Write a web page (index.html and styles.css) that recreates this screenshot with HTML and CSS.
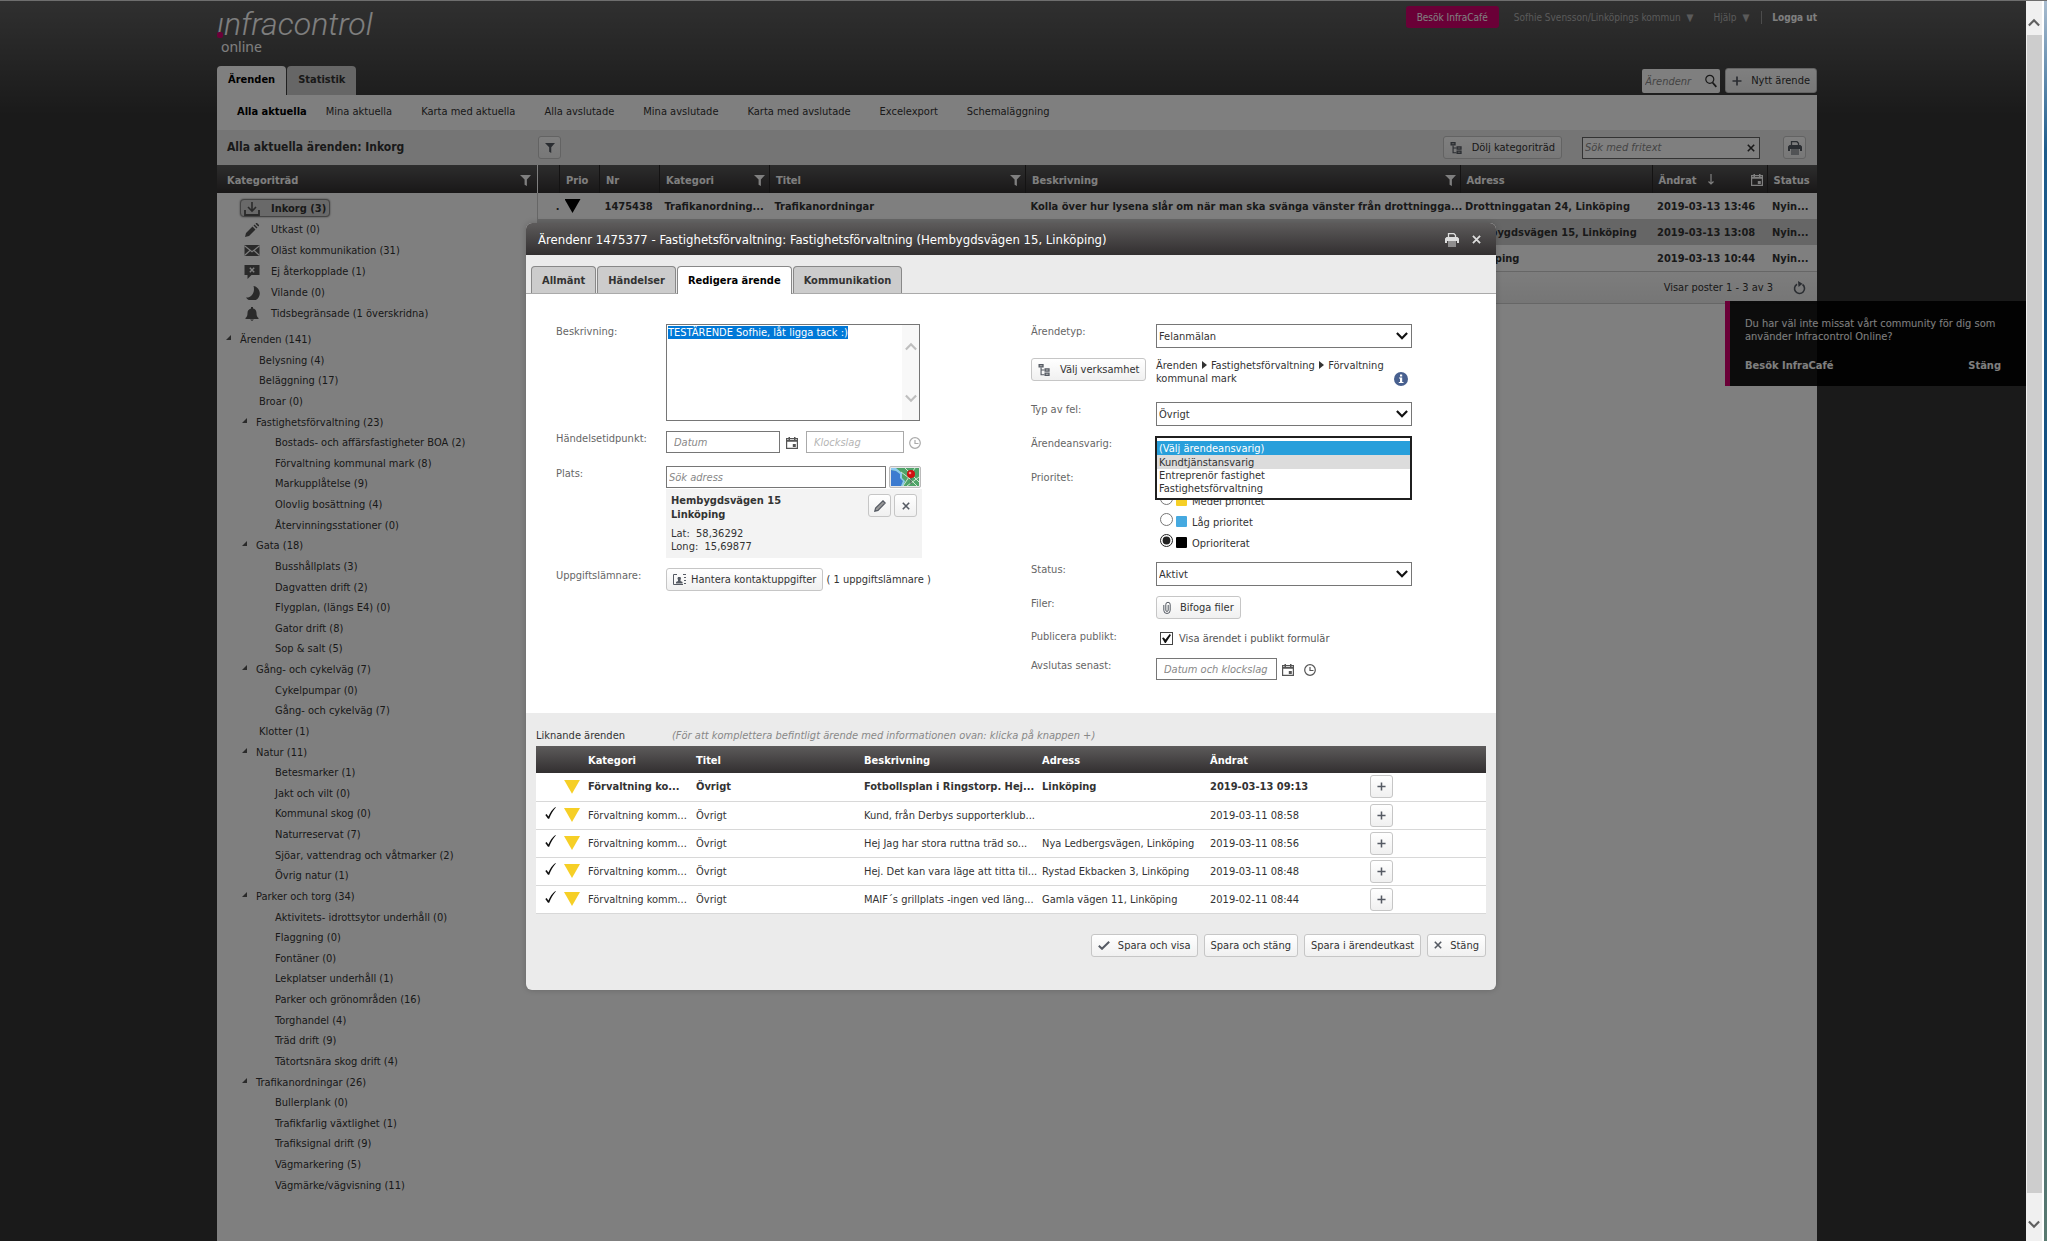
FILE: index.html
```
<!DOCTYPE html>
<html lang="sv">
<head>
    <meta charset="UTF-8">
    <meta name="viewport" content="width=device-width, initial-scale=1.0">
    <title>Infracontrol Online</title>
    <link rel="stylesheet" href="styles.css">
</head>
<body>
    <!-- icons -->
    <svg class="sprite" aria-hidden="true">
        <symbol id="i-filter" viewBox="0 0 12 12"><path d="M0 0h12L7.500 5v7L5 10.500V5z"/></symbol>
        <symbol id="i-tree" viewBox="0 0 14 14"><path d="M3 4v8.500h4M3 7h4" fill="none" stroke="currentColor" stroke-width="1.300"/><path d="M0 0h6v4H0zM7 5h6v4H7zM7 10h6v4H7z"/><path d="M8.500 6.500h3v1h-3zM8.500 11.500h3v1h-3zM1.500 1.500h3v1h-3z" fill="#bbb"/></symbol>
        <symbol id="i-print" viewBox="0 0 14 14"><path d="M3.500 4V.7h5.500l1.500 1.500V4" fill="none" stroke="currentColor" stroke-width="1.300"/><path d="M1.500 4h11L14 5.500V10h-2V8H2v2H0V5.500z"/><path d="M3 9h8M3 11h8M3 13h8" fill="none" stroke="currentColor" stroke-width="1.200"/></symbol>
        <symbol id="i-cal" viewBox="0 0 12 12"><path d="M.6 1.600h10.800v9.800H.6z" fill="none" stroke="currentColor" stroke-width="1.200"/><path d="M0 3h12v1.800H0zM2.500 0H4v3H2.500zM8 0h1.500v3H8zM6.800 7h3v3h-3z"/></symbol>
        <symbol id="i-clock" viewBox="0 0 12 12"><circle cx="6" cy="6" r="5.300" fill="none" stroke="currentColor" stroke-width="1.200"/><path d="M6 3v3.500h3.500" fill="none" stroke="currentColor" stroke-width="1.200"/></symbol>
        <symbol id="i-close" viewBox="0 0 8 8"><path d="M.8.8l6.400 6.400M7.200.8L.8 7.200" fill="none" stroke="currentColor" stroke-width="1.600"/></symbol>
        <symbol id="i-plus" viewBox="0 0 10 10"><path d="M5 .5v9M.5 5h9" fill="none" stroke="currentColor" stroke-width="1.700"/></symbol>
        <symbol id="i-check" viewBox="0 0 12 9"><path d="M.8 4.800l3.200 3L11.200.8" fill="none" stroke="currentColor" stroke-width="2"/></symbol>
        <symbol id="i-tick" viewBox="0 0 11 12"><path d="M.3 8L1.600 7l1.800 2.600C4.800 6 7.200 2.400 10.400 0l.4.400C8 3.500 5.600 7.500 4.200 11.800H3z"/></symbol>
        <symbol id="i-search" viewBox="0 0 12 14"><circle cx="4.800" cy="5.300" r="4" fill="none" stroke="currentColor" stroke-width="1.200"/><path d="M7.500 8.500l3.800 4.300" stroke="currentColor" stroke-width="1.800"/></symbol>
        <symbol id="i-clip" viewBox="0 0 8 13"><path d="M5.200 4v5.200a1.200 1.200 0 0 1-2.400 0V3.500a2.200 2.200 0 0 1 4.400 0v5.800a3.200 3.200 0 0 1-6.400 0V4" fill="none" stroke="currentColor"/></symbol>
        <symbol id="i-contact" viewBox="0 0 13 11"><path d="M3 .5H.5v10H3M3 10.500h7M3 .5h1M10 .5h3M11 3.500h2M11 6.500h2M11 9.500h2" fill="none" stroke="currentColor"/><path d="M3 9.500V8l2-1V6L4.500 4.500 5 3h2.500L8 4.500 7.500 6v1l2 1v1.500z"/></symbol>
        <symbol id="i-pencil" viewBox="0 0 14 14"><path d="M0 14l1-4 6.500-6.500 3 3L4 13zM8.500 2.500l1-1 3 3-1 1zM10.500.7l.7-.7h.8l2 2v.8l-.7.7z"/></symbol>
        <symbol id="i-pen" viewBox="0 0 12 12"><path d="M.8 11.200l.8-3.200L9 .8l2.200 2.200L4 10.400z" fill="#999" stroke="currentColor" stroke-width="1.200"/></symbol>
        <symbol id="i-inbox" viewBox="0 0 16 14"><path d="M1 8v5h14V8" fill="none" stroke="currentColor" stroke-width="1.800"/><path d="M8 0v8M4 5l4 4 4-4" fill="none" stroke="currentColor" stroke-width="1.600"/></symbol>
        <symbol id="i-mail" viewBox="0 0 15 11"><path d="M0 0h15v11H0z"/><path d="M0 .8l7.500 6 7.500-6M0 10.500l5.500-5M15 10.500l-5.500-5" fill="none" stroke="#fff" stroke-width="1.100"/></symbol>
        <symbol id="i-noreply" viewBox="0 0 15 14"><path d="M0 0h15v10H7l-4 4v-4H0z"/><path d="M5.300 2.800l4.400 4.400M9.700 2.800L5.300 7.200" stroke="#fff" stroke-width="1.400"/></symbol>
        <symbol id="i-moon" viewBox="0 0 14 14"><path d="M8.500 0A7.500 7.500 0 1 1 1 11.500C6 12 10.500 6.500 8.500 0z"/></symbol>
        <symbol id="i-bell" viewBox="0 0 14 14"><path d="M6 0h2v1.500c2.500.5 3.500 2.500 3.500 4.500 0 3 .8 4 2 5v1h-13v-1c1.200-1 2-2 2-5 0-2 1-4 3.500-4.500zM5 12.500h4L7 14z"/></symbol>
        <symbol id="i-refresh" viewBox="0 0 13 14"><path d="M4 3.200a5 5 0 1 0 5.500.3" fill="none" stroke="currentColor" stroke-width="1.600"/><path d="M5 0l4.500 2.700L5.500 6z"/></symbol>
        <symbol id="i-down" viewBox="0 0 12 8"><path d="M.9 1L6 6.200 11.100 1" fill="none" stroke="currentColor" stroke-width="2.200"/></symbol>
        <symbol id="i-up" viewBox="0 0 12 8"><path d="M.9 7L6 1.800 11.100 7" fill="none" stroke="currentColor" stroke-width="2.200"/></symbol>
        <symbol id="i-sort" viewBox="0 0 8 11"><path d="M4 0v10M1.500 7.500L4 10l2.500-2.500" fill="none" stroke="currentColor" stroke-width="1.200"/></symbol>
        <symbol id="i-info" viewBox="0 0 14 14"><circle cx="7" cy="7" r="7" fill="#48608f"/><path d="M5 5.500h3.200V10H9.500v1H4.800v-1H6V6.500H5zM6 2.500h2.200v2H6z" fill="#fff"/></symbol>
    </svg>

    <div class="viewport">
        <div class="page">
            <header class="top">
                <div class="logo">
                    <span class="logo-name">ınfracontrol<i class="logo-dot"></i></span>
                    <span class="logo-sub">online</span>
                </div>
                <div class="user-menu">
                    <button type="button" class="cafe">Besök InfraCafé</button>
                    <a href="#" class="user">Sofhie Svensson/Linköpings kommun <span class="caret">▼</span></a>
                    <a href="#" class="help">Hjälp <span class="caret">▼</span></a>
                    <a href="#" class="logout">Logga ut</a>
                </div>
            </header>
            <div class="tab-row">
                <nav class="main-tabs">
                    <a href="#" class="active">Ärenden</a>
                    <a href="#">Statistik</a>
                </nav>
                <div class="quick">
                    <label class="case-search">
                        <input type="text" placeholder="Ärendenr" aria-label="Ärendenr">
                        <svg width="12" height="14"><use href="#i-search"/></svg>
                    </label>
                    <button type="button" class="btn new-case"><svg width="10" height="10"><use href="#i-plus"/></svg>Nytt ärende</button>
                </div>
            </div>
            <nav class="sub-nav">
                <a href="#" class="active">Alla aktuella</a>
                <a href="#">Mina aktuella</a>
                <a href="#">Karta med aktuella</a>
                <a href="#">Alla avslutade</a>
                <a href="#">Mina avslutade</a>
                <a href="#">Karta med avslutade</a>
                <a href="#">Excelexport</a>
                <a href="#">Schemaläggning</a>
            </nav>
            <div class="toolbar">
                <h1>Alla aktuella ärenden: Inkorg</h1>
                <button type="button" class="btn icon-btn" aria-label="Filter"><svg width="10" height="10"><use href="#i-filter"/></svg></button>
                <div class="toolbar-right">
                    <button type="button" class="btn"><svg width="13" height="12"><use href="#i-tree"/></svg>Dölj kategoriträd</button>
                    <label class="text-search">
                        <input type="text" placeholder="Sök med fritext" aria-label="Sök med fritext">
                        <svg width="8" height="8"><use href="#i-close"/></svg>
                    </label>
                    <button type="button" class="btn icon-btn" aria-label="Skriv ut"><svg width="14" height="14"><use href="#i-print"/></svg></button>
                </div>
            </div>

            <div class="columns">
                <aside class="sidebar">
                    <div class="side-head">Kategoriträd <svg width="11" height="11"><use href="#i-filter"/></svg></div>
                    <ul class="boxes">
                        <li class="selected"><svg width="16" height="14"><use href="#i-inbox"/></svg>Inkorg (3)</li>
                        <li><svg width="16" height="14"><use href="#i-pencil"/></svg>Utkast (0)</li>
                        <li><svg width="16" height="11"><use href="#i-mail"/></svg>Oläst kommunikation (31)</li>
                        <li><svg width="16" height="14"><use href="#i-noreply"/></svg>Ej återkopplade (1)</li>
                        <li><svg width="16" height="14"><use href="#i-moon"/></svg>Vilande (0)</li>
                        <li><svg width="16" height="14"><use href="#i-bell"/></svg>Tidsbegränsade (1 överskridna)</li>
                    </ul>
                    <ul class="tree">
                        <li class="root open">Ärenden (141)</li>
                        <li>Belysning (4)</li>
                        <li>Beläggning (17)</li>
                        <li>Broar (0)</li>
                        <li class="open">Fastighetsförvaltning (23)</li>
                        <li class="leaf">Bostads- och affärsfastigheter BOA (2)</li>
                        <li class="leaf">Förvaltning kommunal mark (8)</li>
                        <li class="leaf">Markupplåtelse (9)</li>
                        <li class="leaf">Olovlig bosättning (4)</li>
                        <li class="leaf">Återvinningsstationer (0)</li>
                        <li class="open">Gata (18)</li>
                        <li class="leaf">Busshållplats (3)</li>
                        <li class="leaf">Dagvatten drift (2)</li>
                        <li class="leaf">Flygplan, (längs E4) (0)</li>
                        <li class="leaf">Gator drift (8)</li>
                        <li class="leaf">Sop &amp; salt (5)</li>
                        <li class="open">Gång- och cykelväg (7)</li>
                        <li class="leaf">Cykelpumpar (0)</li>
                        <li class="leaf">Gång- och cykelväg (7)</li>
                        <li>Klotter (1)</li>
                        <li class="open">Natur (11)</li>
                        <li class="leaf">Betesmarker (1)</li>
                        <li class="leaf">Jakt och vilt (0)</li>
                        <li class="leaf">Kommunal skog (0)</li>
                        <li class="leaf">Naturreservat (7)</li>
                        <li class="leaf">Sjöar, vattendrag och våtmarker (2)</li>
                        <li class="leaf">Övrig natur (1)</li>
                        <li class="open">Parker och torg (34)</li>
                        <li class="leaf">Aktivitets- idrottsytor underhåll (0)</li>
                        <li class="leaf">Flaggning (0)</li>
                        <li class="leaf">Fontäner (0)</li>
                        <li class="leaf">Lekplatser underhåll (1)</li>
                        <li class="leaf">Parker och grönområden (16)</li>
                        <li class="leaf">Torghandel (4)</li>
                        <li class="leaf">Träd drift (9)</li>
                        <li class="leaf">Tätortsnära skog drift (4)</li>
                        <li class="open">Trafikanordningar (26)</li>
                        <li class="leaf">Bullerplank (0)</li>
                        <li class="leaf">Trafikfarlig växtlighet (1)</li>
                        <li class="leaf">Trafiksignal drift (9)</li>
                        <li class="leaf">Vägmarkering (5)</li>
                        <li class="leaf">Vägmärke/vägvisning (11)</li>
                    </ul>
                </aside>
                <main class="list">
                    <table class="cases">
                        <colgroup>
                            <col class="c-dot"><col class="c-prio"><col class="c-nr"><col class="c-cat"><col class="c-title"><col><col class="c-addr"><col class="c-date"><col class="c-status">
                        </colgroup>
                        <thead>
                            <tr>
                                <th></th>
                                <th>Prio</th>
                                <th>Nr</th>
                                <th><div class="th">Kategori <svg width="11" height="11"><use href="#i-filter"/></svg></div></th>
                                <th><div class="th">Titel <svg width="11" height="11"><use href="#i-filter"/></svg></div></th>
                                <th><div class="th">Beskrivning <svg width="11" height="11"><use href="#i-filter"/></svg></div></th>
                                <th>Adress</th>
                                <th><div class="th"><span>Ändrat <svg class="sort" width="8" height="11"><use href="#i-sort"/></svg></span><svg width="12" height="12"><use href="#i-cal"/></svg></div></th>
                                <th>Status</th>
                            </tr>
                        </thead>
                        <tbody>
                            <tr>
                                <td class="dot">.</td>
                                <td><span class="prio black"></span></td>
                                <td>1475438</td>
                                <td>Trafikanordning...</td>
                                <td>Trafikanordningar</td>
                                <td>Kolla över hur lysena slår om när man ska svänga vänster från drottningga...</td>
                                <td>Drottninggatan 24, Linköping</td>
                                <td>2019-03-13 13:46</td>
                                <td>Nyin...</td>
                            </tr>
                            <tr class="marked">
                                <td></td><td></td><td></td><td></td><td></td><td></td>
                                <td>Hembygdsvägen 15, Linköping</td>
                                <td>2019-03-13 13:08</td>
                                <td>Nyin...</td>
                            </tr>
                            <tr>
                                <td></td><td></td><td></td><td></td><td></td><td></td>
                                <td>Linköping</td>
                                <td>2019-03-13 10:44</td>
                                <td>Nyin...</td>
                            </tr>
                        </tbody>
                    </table>
                    <div class="pager">Visar poster 1 - 3 av 3 <svg width="13" height="14"><use href="#i-refresh"/></svg></div>
                </main>
            </div>
        </div>

        <div class="notice">
            <p>Du har väl inte missat vårt community för dig som använder Infracontrol Online?</p>
            <div class="notice-actions"><a href="#">Besök InfraCafé</a><a href="#">Stäng</a></div>
        </div>

        <div class="overlay">
            <section class="modal">
                <header class="modal-head">
                    <h2>Ärendenr 1475377 - Fastighetsförvaltning: Fastighetsförvaltning (Hembygdsvägen 15, Linköping)</h2>
                    <button type="button" aria-label="Skriv ut"><svg width="14" height="14"><use href="#i-print"/></svg></button>
                    <button type="button" aria-label="Stäng"><svg width="9" height="9"><use href="#i-close"/></svg></button>
                </header>
                <nav class="modal-tabs">
                    <a href="#">Allmänt</a>
                    <a href="#">Händelser</a>
                    <a href="#" class="active">Redigera ärende</a>
                    <a href="#">Kommunikation</a>
                </nav>
                <form class="form">
                    <div class="left">
                        <div class="row">
                            <label for="desc">Beskrivning:</label>
                            <div class="area">
                                <textarea id="desc" spellcheck="false">TESTÄRENDE Sofhie, låt ligga tack :)</textarea>
                                <div class="area-scroll"><svg width="12" height="9"><use href="#i-up"/></svg><svg width="12" height="9"><use href="#i-down"/></svg></div>
                            </div>
                        </div>
                        <div class="row wide">
                            <label for="date">Händelsetidpunkt:</label>
                            <div class="line">
                                <input type="text" id="date" class="date" placeholder="Datum">
                                <svg width="12" height="12"><use href="#i-cal"/></svg>
                                <input type="text" class="time" placeholder="Klockslag" aria-label="Klockslag">
                                <svg class="pale" width="12" height="12"><use href="#i-clock"/></svg>
                            </div>
                        </div>
                        <div class="row">
                            <label for="place">Plats:</label>
                            <div class="place">
                                <div class="line">
                                    <input type="text" id="place" placeholder="Sök adress">
                                    <button type="button" class="map" aria-label="Karta">
                                        <svg width="28" height="18" viewBox="0 0 28 18">
                                            <path fill="#4fa368" d="M0 0h28v18H0z"/>
                                            <path fill="#3c7bd0" d="M0 2l5 1 4 3v4l3 3-2 5H0z"/>
                                            <path fill="#8cc8f0" d="M0 0h5l6 5v5l3 3-2 5h-2l2-5-3-3V6L5 3 0 2z"/>
                                            <path stroke="#cfe8cf" fill="none" d="M12 18L24 0M16 18l12-9M10 4l8 6 8 8M14 0l14 14"/>
                                            <path stroke="#555" d="M20 9v7"/>
                                            <circle cx="20" cy="6" r="4" fill="#d01010"/>
                                            <circle cx="19" cy="5" r="1.300" fill="#f88"/>
                                        </svg>
                                    </button>
                                </div>
                                <div class="address">
                                    <div class="address-text">
                                        <strong>Hembygdsvägen 15</strong>
                                        <strong>Linköping</strong>
                                        <span class="lat">Lat:&nbsp; 58,36292</span>
                                        <span>Long:&nbsp; 15,69877</span>
                                    </div>
                                    <button type="button" class="btn icon-btn" aria-label="Redigera"><svg width="12" height="12"><use href="#i-pen"/></svg></button>
                                    <button type="button" class="btn icon-btn" aria-label="Ta bort"><svg width="8" height="8"><use href="#i-close"/></svg></button>
                                </div>
                            </div>
                        </div>
                        <div class="row">
                            <span class="label">Uppgiftslämnare:</span>
                            <div class="line">
                                <button type="button" class="btn contact"><svg width="13" height="11"><use href="#i-contact"/></svg>Hantera kontaktuppgifter</button>
                                <span class="count">( 1 uppgiftslämnare )</span>
                            </div>
                        </div>
                    </div>

                    <div class="right">
                        <div class="row">
                            <label for="type">Ärendetyp:</label>
                            <div class="select"><select id="type"><option>Felanmälan</option></select><svg width="12" height="8"><use href="#i-down"/></svg></div>
                        </div>
                        <div class="row crumbs-row">
                            <div><button type="button" class="btn"><svg width="13" height="12"><use href="#i-tree"/></svg>Välj verksamhet</button></div>
                            <div class="crumbs">
                                <span>Ärenden <i class="sep"></i> Fastighetsförvaltning <i class="sep"></i> Förvaltning kommunal mark</span>
                                <svg width="14" height="14"><use href="#i-info"/></svg>
                            </div>
                        </div>
                        <div class="row">
                            <label for="fault">Typ av fel:</label>
                            <div class="select"><select id="fault"><option>Övrigt</option></select><svg width="12" height="8"><use href="#i-down"/></svg></div>
                        </div>
                        <div class="row">
                            <label for="owner">Ärendeansvarig:</label>
                            <div class="owner">
                                <select id="owner" size="4">
                                    <option selected>(Välj ärendeansvarig)</option>
                                    <option class="hover">Kundtjänstansvarig</option>
                                    <option>Entreprenör fastighet</option>
                                    <option>Fastighetsförvaltning</option>
                                </select>
                            </div>
                        </div>
                        <div class="row prio-row">
                            <span class="label">Prioritet:</span>
                            <div class="radios">
                                <label><input type="radio" name="prio"><i class="swatch red"></i>Hög prioritet</label>
                                <label><input type="radio" name="prio"><i class="swatch yellow"></i>Medel prioritet</label>
                                <label><input type="radio" name="prio"><i class="swatch blue"></i>Låg prioritet</label>
                                <label><input type="radio" name="prio" checked><i class="swatch"></i>Oprioriterat</label>
                            </div>
                        </div>
                        <div class="row">
                            <label for="status">Status:</label>
                            <div class="select"><select id="status"><option>Aktivt</option></select><svg width="12" height="8"><use href="#i-down"/></svg></div>
                        </div>
                        <div class="row">
                            <span class="label">Filer:</span>
                            <div><button type="button" class="btn"><svg width="8" height="13"><use href="#i-clip"/></svg>Bifoga filer</button></div>
                        </div>
                        <div class="row">
                            <span class="label">Publicera publikt:</span>
                            <label class="publish"><input type="checkbox" checked>Visa ärendet i publikt formulär</label>
                        </div>
                        <div class="row">
                            <label for="due">Avslutas senast:</label>
                            <div class="line due">
                                <input type="text" id="due" placeholder="Datum och klockslag">
                                <svg width="12" height="12"><use href="#i-cal"/></svg>
                                <svg width="12" height="12"><use href="#i-clock"/></svg>
                            </div>
                        </div>
                    </div>
                </form>

                <div class="similar">
                    <div class="similar-head"><span>Liknande ärenden</span><em>(För att komplettera befintligt ärende med informationen ovan: klicka på knappen +)</em></div>
                    <table>
                        <colgroup>
                            <col class="s-tick"><col class="s-prio"><col class="s-cat"><col class="s-title"><col class="s-desc"><col class="s-title"><col class="s-date"><col>
                        </colgroup>
                        <thead>
                            <tr><th></th><th></th><th>Kategori</th><th>Titel</th><th>Beskrivning</th><th>Adress</th><th>Ändrat</th><th></th></tr>
                        </thead>
                        <tbody>
                            <tr class="unread">
                                <td></td>
                                <td><span class="prio"></span></td>
                                <td>Förvaltning ko...</td><td>Övrigt</td><td>Fotbollsplan i Ringstorp. Hej...</td><td>Linköping</td><td>2019-03-13 09:13</td>
                                <td><button type="button" class="btn icon-btn" aria-label="Lägg till"><svg width="9" height="9"><use href="#i-plus"/></svg></button></td>
                            </tr>
                            <tr>
                                <td><svg class="tick" width="11" height="12"><use href="#i-tick"/></svg></td>
                                <td><span class="prio"></span></td>
                                <td>Förvaltning komm...</td><td>Övrigt</td><td>Kund, från Derbys supporterklub...</td><td></td><td>2019-03-11 08:58</td>
                                <td><button type="button" class="btn icon-btn" aria-label="Lägg till"><svg width="9" height="9"><use href="#i-plus"/></svg></button></td>
                            </tr>
                            <tr>
                                <td><svg class="tick" width="11" height="12"><use href="#i-tick"/></svg></td>
                                <td><span class="prio"></span></td>
                                <td>Förvaltning komm...</td><td>Övrigt</td><td>Hej Jag har stora ruttna träd so...</td><td>Nya Ledbergsvägen, Linköping</td><td>2019-03-11 08:56</td>
                                <td><button type="button" class="btn icon-btn" aria-label="Lägg till"><svg width="9" height="9"><use href="#i-plus"/></svg></button></td>
                            </tr>
                            <tr>
                                <td><svg class="tick" width="11" height="12"><use href="#i-tick"/></svg></td>
                                <td><span class="prio"></span></td>
                                <td>Förvaltning komm...</td><td>Övrigt</td><td>Hej. Det kan vara läge att titta til...</td><td>Rystad Ekbacken 3, Linköping</td><td>2019-03-11 08:48</td>
                                <td><button type="button" class="btn icon-btn" aria-label="Lägg till"><svg width="9" height="9"><use href="#i-plus"/></svg></button></td>
                            </tr>
                            <tr>
                                <td><svg class="tick" width="11" height="12"><use href="#i-tick"/></svg></td>
                                <td><span class="prio"></span></td>
                                <td>Förvaltning komm...</td><td>Övrigt</td><td>MAIF´s grillplats -ingen ved läng...</td><td>Gamla vägen 11, Linköping</td><td>2019-02-11 08:44</td>
                                <td><button type="button" class="btn icon-btn" aria-label="Lägg till"><svg width="9" height="9"><use href="#i-plus"/></svg></button></td>
                            </tr>
                        </tbody>
                    </table>
                    <div class="modal-actions">
                        <button type="button" class="btn"><svg width="12" height="9"><use href="#i-check"/></svg>Spara och visa</button>
                        <button type="button" class="btn">Spara och stäng</button>
                        <button type="button" class="btn">Spara i ärendeutkast</button>
                        <button type="button" class="btn"><svg width="8" height="8"><use href="#i-close"/></svg>Stäng</button>
                    </div>
                </div>
            </section>
        </div>
    </div>

    <div class="scrollbar">
        <svg width="12" height="9"><use href="#i-up"/></svg>
        <div class="thumb"></div>
        <svg width="12" height="9"><use href="#i-down"/></svg>
    </div>
    <div class="desktop-edge"></div>

    <script>
        // select the whole description when the form opens
        document.getElementById('desc').select();
    </script>
</body>
</html>
```
FILE: styles.css
```
* {
    box-sizing: border-box;
}
body {
    margin: 0;
    height: 100vh;
    display: flex;
    overflow: hidden;
    border-top: 1px solid #6e6e6e;
    background: #343434;
    font-family: 'DejaVu Sans Condensed', 'DejaVu Sans', sans-serif;
    font-size: 11px;
    line-height: 13px;
    color: #333;
}
a {
    color: inherit;
    text-decoration: none;
}
ul {
    list-style: none;
    margin: 0;
    padding: 0;
}
svg {
    flex: none;
    display: block;
    fill: currentColor;
}
button, input, select, textarea {
    font: inherit;
    color: inherit;
}
input::placeholder {
    color: #888;
    font-style: italic;
    opacity: 1;
}
.sprite {
    position: absolute;
    width: 0;
    height: 0;
}

.viewport {
    flex: 1;
    position: relative;
    overflow: hidden;
    background: linear-gradient(#606060, #343434 115px);
}
.page {
    margin: 0 209px 0 217px;
}

/* header */
.top {
    height: 65px;
    display: flex;
    justify-content: space-between;
    align-items: flex-start;
    color: #fff;
}
.logo {
    padding-top: 7px;
}
.logo-name {
    display: block;
    position: relative;
    font: italic 300 32px/32px Roboto, sans-serif;
}
.logo-dot {
    position: absolute;
    left: 0;
    top: 24px;
    width: 6px;
    height: 6px;
    border-radius: 2px;
    background: #d4006f;
}
.logo-sub {
    display: block;
    padding-left: 4px;
    font: 14px/14px 'Noto Sans', sans-serif;
}
.user-menu {
    display: flex;
    align-items: center;
    padding-top: 5px;
    font-size: 10px;
    color: #b4b4b4;
}
.cafe {
    height: 22px;
    padding: 1px 11px 0;
    border: none;
    border-radius: 3px;
    background: #d4006f;
    color: #fff;
}
.user-menu a {
    margin-top: 1px;
}
.user {
    margin-left: 15px;
}
.help {
    margin-left: 20px;
}
.caret {
    margin-left: 3px;
}
.logout {
    margin-left: 12px;
    padding-left: 10px;
    border-left: 1px solid #999;
    font-weight: bold;
    color: #fff;
}
.tab-row {
    display: flex;
    justify-content: space-between;
    height: 29px;
}
.main-tabs {
    display: flex;
    gap: 1px;
    font-weight: bold;
    line-height: 28px;
}
.main-tabs a {
    padding: 0 11px;
    border-radius: 4px 4px 0 0;
    background: #ccc;
}
.main-tabs .active {
    background: #fff;
    color: #000;
}
.quick {
    display: flex;
    gap: 5px;
    padding-top: 2px;
}
.case-search {
    display: flex;
    align-items: center;
    width: 78px;
    height: 24px;
    margin-top: 1px;
    padding: 0 3px;
    border-radius: 2px;
    background: #fff;
}
.case-search input {
    width: 60px;
    flex: 1;
    border: none;
    padding: 0;
    background: none;
}
.quick .btn {
    height: 25px;
}

.sub-nav {
    display: flex;
    gap: 29px;
    height: 35px;
    padding: 0 20px;
    line-height: 33px;
    background: #fff;
}
.sub-nav .active {
    margin-right: -10px;
    font-weight: bold;
    color: #000;
}

.btn {
    display: inline-flex;
    align-items: center;
    justify-content: center;
    gap: 9px;
    height: 23px;
    padding: 0 6px;
    border: 1px solid #c6c6c6;
    border-radius: 3px;
    background: linear-gradient(#fff, #f0f0f0);
    color: #333;
    white-space: nowrap;
    cursor: pointer;
}
.btn svg {
    color: #555a63;
}
.icon-btn {
    width: 23px;
    padding: 0;
}

.toolbar {
    display: flex;
    align-items: center;
    height: 35px;
    padding: 0 11px 0 10px;
    background: #eaeaea;
}
.toolbar h1 {
    width: 311px;
    margin: 0;
    font-size: 12px;
}
.toolbar-right {
    display: flex;
    align-items: center;
    margin-left: auto;
}
.text-search {
    display: flex;
    align-items: center;
    width: 178px;
    height: 22px;
    margin: 0 23px 0 20px;
    padding: 0 4px 0 2px;
    border: 1px solid #666;
    background: #fff;
}
.text-search input {
    flex: 1;
    width: 100px;
    border: none;
    padding: 0;
    background: none;
}

/* category tree */
.columns {
    display: flex;
    min-height: 1100px;
    background: #fff;
}
.sidebar {
    width: 320px;
}
.side-head {
    display: flex;
    align-items: center;
    justify-content: space-between;
    height: 28px;
    padding: 2px 6px 0 10px;
    background: linear-gradient(#5b5b5b, #322f30);
    font-weight: bold;
    color: #fff;
}
.boxes {
    display: flex;
    flex-direction: column;
    align-items: flex-start;
    gap: 3px;
    padding: 6px 0 0 23px;
}
.boxes li {
    display: flex;
    align-items: center;
    gap: 11px;
    height: 18px;
    padding: 1px 3px 0;
    border: 1px solid transparent;
    border-radius: 4px;
}
.boxes svg {
    color: #555;
}
.boxes .selected {
    border-color: #888;
    background: #d2d2d2;
    box-shadow: 0 0 2px #777;
    font-weight: bold;
}
.tree {
    padding-top: 8px;
    line-height: 1.875;
}
.tree li {
    padding-left: 42px;
}
.tree .leaf {
    padding-left: 58px;
}
.tree .open::before {
    content: '';
    display: inline-block;
    margin: 0 9px 3px 0;
    border: solid transparent;
    border-width: 0 0 5px 5px;
    border-bottom-color: #555;
}
.tree .open {
    padding-left: 25px;
}
.tree .root {
    padding-left: 9px;
}

/* case list */
.list {
    flex: 1;
}
table {
    width: 100%;
    table-layout: fixed;
    border-collapse: collapse;
}
th, td {
    padding: 0;
    text-align: left;
    white-space: nowrap;
}
.c-dot { width: 22px; }
.c-prio { width: 40px; }
.c-nr { width: 60px; }
.c-cat { width: 110px; }
.c-title { width: 256px; }
.c-addr { width: 192px; }
.c-date { width: 115px; }
.c-status { width: 50px; }
.cases thead tr {
    height: 28px;
    background: linear-gradient(#5b5b5b, #322f30);
    color: #fff;
}
.cases th {
    padding: 2px 4px 0 6px;
}
.cases th + th {
    border-left: 1px solid #292727;
}
.th {
    display: flex;
    align-items: center;
    justify-content: space-between;
}
.th span {
    display: flex;
    gap: 10px;
}
.cases td {
    height: 26px;
    padding-left: 5px;
    font-weight: bold;
}
.cases .marked {
    background: #cdcdcd;
}
.cases .dot {
    text-align: right;
}
.cases tbody, .pager {
    border-left: 1px solid #ccc;
}
.prio {
    display: block;
    width: 16px;
    height: 14px;
    background: #f6cf26;
    clip-path: polygon(0 0, 100% 0, 50% 100%);
}
.prio.black {
    background: #000;
}
.pager {
    display: flex;
    align-items: center;
    justify-content: flex-end;
    gap: 20px;
    height: 33px;
    padding-right: 11px;
    border-top: 1px solid #ccc;
    border-bottom: 1px solid #ccc;
    background: linear-gradient(#fafafa, #ececec);
}
.pager svg {
    color: #555a63;
}

.notice {
    position: absolute;
    right: 0;
    top: 300px;
    width: 301px;
    height: 85px;
    padding: 16px 25px 0 15px;
    border-left: 5px solid #d4006f;
    background: rgba(0, 0, 0, 0.9);
    color: #fff;
}
.notice p {
    margin: 0 0 16px;
}
.notice-actions {
    display: flex;
    justify-content: space-between;
    font-weight: bold;
}

/* edit dialog */
.overlay {
    position: absolute;
    inset: 0;
    display: flex;
    justify-content: center;
    align-items: flex-start;
    padding: 222px 4px 0 0;
    background: rgba(0, 0, 0, 0.5);
}
.modal {
    width: 100%;
    max-width: 970px;
    border-radius: 6px;
    overflow: hidden;
    background: #ebebeb;
    box-shadow: 0 0 6px rgba(0, 0, 0, 0.2);
}
.modal-head {
    display: flex;
    align-items: center;
    gap: 13px;
    height: 32px;
    padding: 1px 15px 0 12px;
    background: linear-gradient(#5d5b5b, #322f30);
    color: #fff;
}
.modal-head h2 {
    flex: 1;
    margin: 0;
    font-size: 13px;
    font-weight: normal;
}
.modal-head button {
    padding: 0;
    border: none;
    background: none;
    color: #ddd;
}
.modal-tabs {
    display: flex;
    gap: 1px;
    height: 39px;
    padding: 11px 5px 0;
    border-bottom: 1px solid #aaa;
    font-weight: bold;
    line-height: 27px;
}
.modal-tabs a {
    height: 27px;
    padding: 0 10px;
    border: 1px solid #888;
    border-bottom: none;
    border-radius: 4px 4px 0 0;
    background: #ccc;
}
.modal-tabs .active {
    height: 28px;
    background: #fff;
    color: #000;
}
.form {
    display: flex;
    justify-content: space-between;
    height: 419px;
    padding: 30px 84px 0 30px;
    background: #fff;
}
.row {
    display: grid;
    grid-template-columns: 110px 1fr;
    margin-bottom: 10px;
}
.left {
    width: 375px;
}
.right {
    width: 381px;
}
.right .row {
    grid-template-columns: 125px 1fr;
}
.row.wide {
    margin-bottom: 13px;
}
.row > label:first-child, .label {
    line-height: 15px;
    color: #666;
}
.line {
    display: flex;
    align-items: center;
}
.line input {
    height: 22px;
    border: 1px solid #767676;
    padding: 0 2px;
    background: #fff;
}
.area {
    display: flex;
    width: 254px;
    height: 97px;
    border: 1px solid #767676;
}
.area textarea {
    flex: 1;
    width: 200px;
    padding: 1px;
    border: none;
    outline: none;
    resize: none;
    overflow: hidden;
}
.area textarea::selection {
    background: #0078d7;
    color: #fff;
}
.area-scroll {
    display: flex;
    flex-direction: column;
    justify-content: space-between;
    align-items: center;
    width: 17px;
    padding: 17px 0;
    background: #f8f8f8;
    color: #bfbfbf;
}
.line .date {
    width: 114px;
    padding-left: 7px;
}
.line .time {
    width: 98px;
    padding-left: 7px;
    border-color: #aaa;
}
.line .time::placeholder {
    color: #b5b5b5;
}
.wide .line svg {
    margin: 2px 0 0 6px;
    color: #555;
}
.wide .time {
    margin-left: 8px;
}
.wide .line .pale {
    margin-left: 5px;
    color: #aaa;
}
#place {
    width: 220px;
}
.map {
    width: 32px;
    height: 22px;
    margin-left: 3px;
    padding: 1px;
    border: 1px solid #bbb;
    border-radius: 2px;
    background: #e8e8e8;
}
.address {
    display: flex;
    gap: 3px;
    width: 256px;
    height: 69px;
    margin-top: 1px;
    padding: 5px;
    background: #f3f3f3;
}
.address-text {
    display: flex;
    flex-direction: column;
    flex: 1;
}
.address strong {
    line-height: 14px;
}
.address .lat {
    margin-top: 5px;
}
.btn.contact {
    gap: 5px;
}
.count {
    margin-left: 3px;
    white-space: nowrap;
}

.select {
    position: relative;
}
.select select {
    display: block;
    appearance: none;
    width: 100%;
    height: 24px;
    padding: 0 2px;
    border: 1px solid #767676;
    border-radius: 0;
    background: #fff;
}
.select svg {
    position: absolute;
    right: 4px;
    top: 8px;
    color: #111;
}
.right .crumbs-row {
    height: 34px;
}
.crumbs {
    display: flex;
    align-items: flex-end;
    justify-content: space-between;
    padding-right: 4px;
    height: 28px;
}
.crumbs span {
    width: 236px;
    height: 27px;
}
.sep {
    display: inline-block;
    margin: 0 1px;
    border: solid transparent;
    border-width: 4px 0 4px 5px;
    border-left-color: #333;
}
.owner {
    position: relative;
    height: 24px;
}
.owner select {
    position: absolute;
    left: -1px;
    top: 0;
    z-index: 1;
    width: 257px;
    height: 64px;
    padding: 3px 0;
    border: 2px solid #1f1f1f;
    border-radius: 0;
    outline: none;
    overflow: hidden;
    background: #fff;
}
.owner option {
    min-height: 13px;
    padding: 0 2px;
    line-height: 13px;
}
.owner option:checked {
    padding-top: 1px;
    background: linear-gradient(#289fdb, #289fdb);
    -webkit-text-fill-color: #fff;
}
.owner .hover {
    padding-top: 1px;
    background: #dcdcdc;
}
.right .prio-row {
    margin-bottom: 8px;
}
.radios label {
    display: flex;
    align-items: flex-start;
    height: 21px;
    padding-left: 4px;
    line-height: 21px;
}
.radios input {
    width: 13px;
    height: 13px;
    margin: 1px 3px 0 0;
    accent-color: #222;
}
.swatch {
    width: 11px;
    height: 11px;
    margin: 4px 5px 0 0;
    border-radius: 1px;
    background: #000;
}
.swatch.red { background: #d9232e; }
.swatch.yellow { background: #f6cf26; }
.swatch.blue { background: #45a9e0; }
.publish {
    display: flex;
    align-items: center;
    height: 19px;
    padding-left: 4px;
    color: #555;
}
.publish input {
    appearance: none;
    width: 13px;
    height: 13px;
    margin: 0 6px 0 0;
    border: 1px solid #444;
    background: #fff;
}
.publish input:checked::before {
    content: '';
    display: block;
    width: 9px;
    height: 9px;
    margin: 1px;
    background: #111;
    clip-path: polygon(0 45%, 20% 40%, 38% 62%, 85% 0, 100% 12%, 42% 100%, 32% 100%);
}
.due input {
    width: 121px;
    padding-left: 7px;
}
.due svg {
    margin: 2px 5px 0;
    color: #555;
}

/* similar cases */
.similar {
    padding: 14px 10px 33px;
}
.similar-head {
    display: flex;
    height: 19px;
    line-height: 17px;
}
.similar-head span {
    width: 136px;
}
.similar-head em {
    color: #888;
}
.s-tick { width: 28px; }
.s-prio { width: 24px; }
.s-cat { width: 108px; }
.s-title { width: 168px; }
.s-desc { width: 178px; }
.s-date { width: 160px; }
.similar thead tr {
    height: 27px;
    background: linear-gradient(#5d5b5b, #322f30);
    color: #fff;
}
.similar th {
    padding-top: 2px;
}
.similar tbody tr {
    height: 28px;
    border-bottom: 1px solid #d8d8d8;
    background: #fff;
}
.similar .unread {
    font-weight: bold;
}
.similar td .btn {
    display: flex;
}
.tick {
    margin: 0 0 4px 9px;
    color: #111;
}
.modal-actions {
    display: flex;
    justify-content: flex-end;
    gap: 6px;
    margin-top: 20px;
}
.modal-actions .btn {
    gap: 8px;
}

/* window scrollbar */
.scrollbar {
    display: flex;
    flex-direction: column;
    align-items: center;
    width: 18px;
    padding: 17px 0 12px;
    border-right: 2px solid #fff;
    background: #f0f0f0;
    color: #606060;
}
.thumb {
    flex: 1;
    width: 15px;
    margin: 8px 0 27px;
    background: #cdcdcd;
}
.desktop-edge {
    width: 3px;
    background: linear-gradient(#a9bccf, #1d5c8c 12%, #0e4a7c 50%, #5a7a70);
}
```
